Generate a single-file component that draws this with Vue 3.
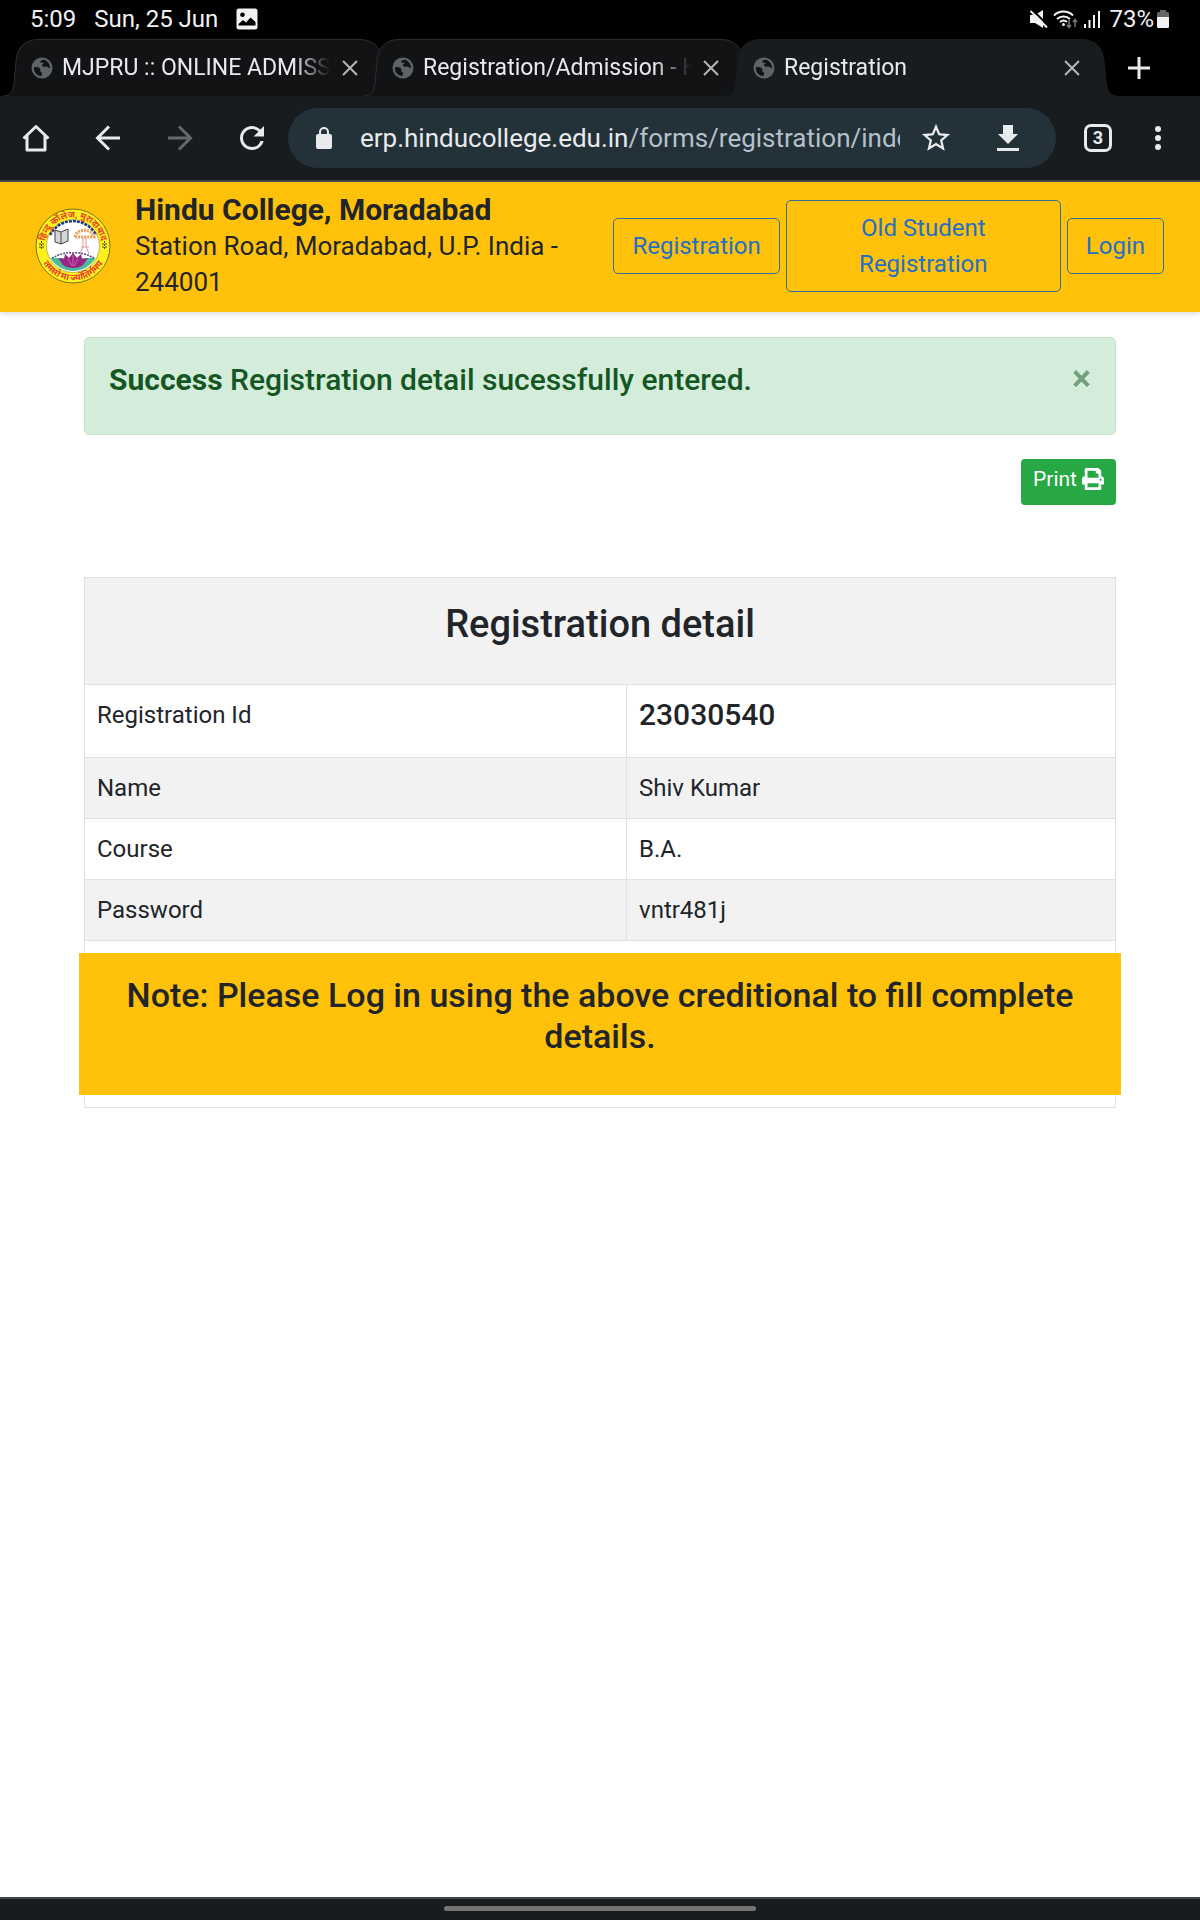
<script setup>
import { ref } from 'vue';

const tabs = [
  { id: 1, title: 'MJPRU :: ONLINE ADMISSION', active: false },
  { id: 2, title: 'Registration/Admission - Hindu', active: false },
  { id: 3, title: 'Registration', active: true },
];

const details = [
  { label: 'Name', value: 'Shiv Kumar' },
  { label: 'Course', value: 'B.A.' },
  { label: 'Password', value: 'vntr481j' },
];

const showAlert = ref(true);

function printPage() {
  window.print();
}
</script>

<template>
  <div class="screen">
    <div class="status-bar">
      <div class="status-left">
        <span>5:09</span>
        <span>Sun, 25 Jun</span>
        <svg width="22" height="22" viewBox="0 0 22 22">
          <path fill="#f2f2f2" fill-rule="evenodd" d="M3 0.500h16a2.500 2.500 0 0 1 2.500 2.500v16a2.500 2.500 0 0 1-2.500 2.500h-16a2.500 2.500 0 0 1-2.500-2.500v-16a2.500 2.500 0 0 1 2.500-2.500zM6.500 4.500a2.300 2.300 0 1 0 .01 0zM2.500 17.500h17v-3.500l-5-4.500-4.500 5-3-2.500-4.500 4z" />
        </svg>
      </div>
      <div class="status-right">
        <svg width="20" height="20" viewBox="0 0 20 20">
          <path fill="#f2f2f2" d="M1 6h5l8-5v18l-8-5H1z" />
          <path stroke="#000" stroke-width="2" d="M3.500 1l16 16" />
          <path stroke="#f2f2f2" stroke-width="2" d="M1.500 2l16.500 16.500" />
        </svg>
        <svg width="26" height="20" viewBox="0 0 26 20">
          <g fill="none" stroke="#f2f2f2" stroke-width="2">
            <path d="M1 6.500a13.500 13.500 0 0 1 19 0" />
            <path d="M4 10a9.500 9.500 0 0 1 13 0" />
            <path d="M7 13a5.500 5.500 0 0 1 7 0" />
          </g>
          <circle cx="10.500" cy="15.500" r="1.500" fill="#f2f2f2" />
          <path fill="none" stroke="#777" stroke-width="1.500" d="M16 11v7M14 16l2 2.500 2-2.500M22 18v-7M20 13l2-2.500 2 2.500" />
        </svg>
        <svg width="18" height="20" viewBox="0 0 18 20">
          <path fill="#f2f2f2" d="M1 15h2v4H1zM5.500 11h2v8h-2zM10 6h2v13h-2zM15 2h2v17h-2z" />
        </svg>
        <span class="battery">73%</span>
        <svg width="14" height="20" viewBox="0 0 14 20">
          <path fill="#666" d="M4 1h6v2h1.500a1.500 1.500 0 0 1 1.500 1.500V9H1V4.500A1.500 1.500 0 0 1 2.500 3H4z" />
          <path fill="#f2f2f2" d="M1 8h12v9.500a1.500 1.500 0 0 1-1.500 1.500h-9A1.500 1.500 0 0 1 1 17.500z" />
        </svg>
      </div>
    </div>

    <div class="tab-strip">
      <div v-for="tab in tabs" :key="tab.id" class="tab" :class="{ active: tab.active }">
        <svg class="tab-shape" viewBox="0 0 392 57" preserveAspectRatio="none">
          <path d="M0 57C8 57 10 52 11 44L13 22C14 8 22 .5 35 .5H357C370 .5 378 8 379 22L381 42C382 52 386 57 392 57" />
        </svg>
        <svg class="globe" width="22" height="22" viewBox="0 0 22 22">
          <circle cx="11" cy="11" r="10.500" fill="#5f6368" />
          <path class="land" d="M3 10c3 0 5 0 6 1.500 1 1.300-.5 3 1 3.500 1.500.3 1 2 .5 4C6 19 2.500 15.500 3 10zM9 5c1-2 3-2.500 5-2 3 1.500 5 4.500 5 8-2 .5-2-2-4-1.500-2.500.5-4 0-4-1.500 0-1.300 2-1 1.500-2C12 5 10 6.500 9 5z" />
        </svg>
        <span class="tab-title">{{ tab.title }}</span>
        <button class="icon-btn tab-close" aria-label="Close tab">
          <svg width="16" height="16" viewBox="0 0 16 16">
            <path stroke="#b4b6b8" stroke-width="2" d="M1 1l14 14M15 1L1 15" />
          </svg>
        </button>
      </div>
      <button class="icon-btn new-tab" aria-label="New tab">
        <svg width="22" height="22" viewBox="0 0 22 22">
          <path stroke="#e8eaed" stroke-width="3" d="M11 0v22M0 11h22" />
        </svg>
      </button>
    </div>

    <div class="toolbar">
      <button class="icon-btn tool" aria-label="Home">
        <svg width="28" height="28" viewBox="0 0 28 28">
          <path fill="none" stroke="#e8eaed" stroke-width="3" stroke-linejoin="round" d="M1.500 14.500L14 2.500l12.500 12M5 12v14h18V12" />
        </svg>
      </button>
      <button class="icon-btn tool" aria-label="Back">
        <svg width="26" height="26" viewBox="0 0 26 26">
          <path fill="none" stroke="#e8eaed" stroke-width="3" d="M25 13H3M14 1.500L2.500 13 14 24.500" />
        </svg>
      </button>
      <button class="icon-btn tool" aria-label="Forward">
        <svg width="26" height="26" viewBox="0 0 26 26">
          <path fill="none" stroke="#66696c" stroke-width="3" d="M1 13h22M12 1.500L23.500 13 12 24.500" />
        </svg>
      </button>
      <button class="icon-btn tool" aria-label="Reload">
        <svg width="36" height="36" viewBox="0 0 24 24">
          <path fill="#e8eaed" d="M17.650 6.350A7.958 7.958 0 0 0 12 4c-4.420 0-7.990 3.580-7.990 8s3.570 8 7.990 8c3.730 0 6.840-2.550 7.730-6h-2.080A5.990 5.990 0 0 1 12 18c-3.310 0-6-2.690-6-6s2.690-6 6-6c1.660 0 3.140.690 4.220 1.780L13 11h7V4l-2.350 2.350z" />
        </svg>
      </button>
      <div class="omnibox">
        <svg class="lock" width="16" height="22" viewBox="0 0 16 22">
          <path fill="none" stroke="#e8eaed" stroke-width="2" d="M4 9V5a4 4 0 0 1 8 0v4" />
          <rect y="7" width="16" height="15" rx="2" fill="#e8eaed" />
        </svg>
        <div class="url">erp.hinducollege.edu.in<span>/forms/registration/index</span></div>
        <button class="icon-btn tool" aria-label="Bookmark">
          <svg width="34" height="34" viewBox="0 0 24 24">
            <path fill="#e8eaed" d="M22 9.240l-7.190-.620L12 2 9.190 8.630 2 9.240l5.460 4.730L5.820 21 12 17.270 18.180 21l-1.630-7.030L22 9.240zM12 15.400l-3.760 2.270 1-4.280-3.320-2.880 4.380-.380L12 6.100l1.710 4.040 4.380.380-3.320 2.880 1 4.280L12 15.400z" />
          </svg>
        </button>
        <button class="icon-btn tool" aria-label="Download">
          <svg width="22" height="26" viewBox="0 0 22 26">
            <path fill="#e8eaed" d="M6 0h10v9h5L11 19 1 9h5zM0 23h22v3H0z" />
          </svg>
        </button>
      </div>
      <button class="icon-btn tab-count" aria-label="Open tabs">
        <span>3</span>
      </button>
      <button class="icon-btn menu" aria-label="Menu">
        <svg width="6" height="26" viewBox="0 0 6 26">
          <g fill="#e8eaed">
            <circle cx="3" cy="4" r="3" />
            <circle cx="3" cy="13" r="3" />
            <circle cx="3" cy="22" r="3" />
          </g>
        </svg>
      </button>
    </div>

    <header class="site-header">
      <svg class="logo" width="76" height="76" viewBox="0 0 76 76">
        <defs>
          <path id="arc-top" d="M9.500 38a28.500 28.500 0 0 1 57 0" />
          <path id="arc-bottom" d="M3.500 38a34.500 34.500 0 0 0 69 0" />
        </defs>
        <circle cx="38" cy="38" r="37" fill="#fdf01c" stroke="#77751c" />
        <circle cx="38" cy="38" r="26.500" fill="#fff" stroke="#b9bd4a" />
        <path fill="#4dbb98" d="M15.500 50h45a26 26 0 0 1-45 0z" />
        <path fill="none" stroke="#1f3b78" stroke-width="2.500" stroke-dasharray="3 1" d="M15 27a26 26 0 0 1 46 0" />
        <path fill="none" stroke="#4a4f86" stroke-width="1.500" stroke-dasharray="2 1" d="M17 50c6-3 13-6 21-5 8-1 15 2 21 5" />
        <path fill="#d6d6d6" stroke="#444" d="M20 22l6 2 7-3v12l-7 3-6-2zM26 24v12" />
        <path fill="none" stroke="#e8a05a" stroke-width="3" stroke-dasharray="2 1" d="M40 29c2-9 17-9 19 0z" />
        <path fill="none" stroke="#d99" d="M48 30v8l-3 8M51 30v8l3 8M46 39h8" />
        <path fill="#9b2383" d="M38 45l4 5 4-4 1 5 6-1-5 7c-5 4-15 4-20 0l-5-7 6 1 1-5 4 4z" />
        <path fill="none" stroke="#c968b4" d="M38 47v11M33 51l4 7M43 51l-4 7" />
        <path stroke="#4a4a20" stroke-dasharray="2 1" d="M4 36h5M4 39h5M67 36h5M67 39h5M6.500 33v9M69.500 33v9" />
        <text class="logo-text"><textPath href="#arc-top" startOffset="50%">हिन्दू कॉलेज, मुरादाबाद</textPath></text>
        <text class="logo-text"><textPath href="#arc-bottom" startOffset="50%">तमसो मा ज्योतिर्गमय</textPath></text>
      </svg>
      <div class="brand">
        <strong>Hindu College, Moradabad</strong>
        <div>Station Road, Moradabad, U.P. India - 244001</div>
      </div>
      <nav>
        <a href="#registration">Registration</a>
        <a href="#old-student">Old Student Registration</a>
        <a href="#login">Login</a>
      </nav>
    </header>

    <main>
      <div v-if="showAlert" class="alert" role="alert">
        <h4><strong>Success</strong> Registration detail sucessfully entered.</h4>
        <button class="icon-btn alert-close" aria-label="Close" @click="showAlert = false">×</button>
      </div>

      <button class="print" @click="printPage">
        Print
        <svg width="22" height="22" viewBox="0 0 512 512">
          <path fill="#fff" d="M448 192V77.250c0-8.490-3.370-16.620-9.370-22.630L393.370 9.370c-6-6-14.140-9.370-22.630-9.370H96C78.330 0 64 14.330 64 32v160c-35.350 0-64 28.650-64 64v112c0 8.840 7.160 16 16 16h48v96c0 17.670 14.330 32 32 32h320c17.670 0 32-14.330 32-32v-96h48c8.840 0 16-7.160 16-16V256c0-35.350-28.650-64-64-64zm-64 256H128v-96h256v96zm0-224H128V64h192v48c0 8.840 7.160 16 16 16h48v96zm48 72c-13.250 0-24-10.750-24-24 0-13.260 10.750-24 24-24s24 10.740 24 24c0 13.250-10.750 24-24 24z" />
        </svg>
      </button>

      <table>
        <tbody>
          <tr>
            <th colspan="2" class="table-title"><h2>Registration detail</h2></th>
          </tr>
          <tr>
            <td class="label">Registration Id</td>
            <td><h4 class="reg-id">23030540</h4></td>
          </tr>
          <tr v-for="row in details" :key="row.label">
            <td class="label">{{ row.label }}</td>
            <td>{{ row.value }}</td>
          </tr>
          <tr>
            <td colspan="2">
              <h3 class="note">Note: Please Log in using the above creditional to fill complete details.</h3>
            </td>
          </tr>
        </tbody>
      </table>
    </main>

    <div class="nav-bar">
      <div class="nav-handle"></div>
    </div>
  </div>
</template>

<style>
body {
  margin: 0;
  background: #fff;
}
</style>

<style scoped>
* {
  box-sizing: border-box;
}
.screen {
  display: flex;
  flex-direction: column;
  min-height: 100vh;
  font-family: Roboto, "Noto Sans", sans-serif;
  font-size: 24px;
  line-height: 36px;
  color: #212529;
}
.screen svg {
  display: block;
  flex: none;
}
.icon-btn {
  display: flex;
  align-items: center;
  justify-content: center;
  flex: none;
  padding: 0;
  border: 0;
  background: none;
  font-family: inherit;
}

/* system status bar */
.status-bar {
  display: flex;
  align-items: center;
  justify-content: space-between;
  height: 39px;
  padding: 0 30px 2px;
  background: #000;
  color: #f2f2f2;
}
.status-left,
.status-right {
  display: flex;
  align-items: center;
}
.status-left {
  gap: 18px;
}
.status-right {
  gap: 4px;
}
.status-right .battery {
  margin: 0 -2px 0 4px;
}

/* browser tabs */
.tab-strip {
  display: flex;
  height: 57px;
  padding-left: 3px;
  background: #000;
  color: #e8eaed;
}
.tab {
  position: relative;
  display: flex;
  align-items: center;
  flex: 0 1 392px;
  min-width: 0;
  padding: 0 37px 0 28px;
}
.tab + .tab {
  margin-left: -31px;
}
.tab > * {
  position: relative;
}
.tab .tab-shape {
  position: absolute;
  top: 0;
  left: 0;
  width: 100%;
  height: 100%;
  fill: #121315;
  stroke: #2a2c2f;
}
.tab.active .tab-shape {
  fill: #191c1f;
  stroke: #191c1f;
}
.land {
  fill: #121315;
}
.tab-title {
  flex: 1;
  min-width: 0;
  margin: 0 12px 0 9px;
  overflow: hidden;
  white-space: nowrap;
  font-size: 23px;
  mask-image: linear-gradient(to right, #000 calc(100% - 36px), transparent);
}
.new-tab {
  width: 44px;
}

/* address bar */
.toolbar {
  display: flex;
  align-items: center;
  height: 86px;
  padding-right: 24px;
  border-bottom: 2px solid #45484b;
  background: #191c1f;
}
.tool {
  width: 72px;
  height: 60px;
}
.omnibox {
  display: flex;
  align-items: center;
  flex: 1;
  min-width: 0;
  height: 60px;
  padding-right: 12px;
  border-radius: 30px;
  background: #233138;
}
.lock {
  margin: 0 28px;
}
.url {
  flex: 1;
  min-width: 0;
  overflow: hidden;
  white-space: nowrap;
  font-size: 26px;
  color: #e8eaed;
}
.url span {
  color: #b5c0cb;
}
.tab-count {
  width: 84px;
}
.tab-count span {
  width: 28px;
  height: 28px;
  border: 3px solid #e8eaed;
  border-radius: 7px;
  font-size: 18px;
  font-weight: 700;
  line-height: 22px;
  color: #e8eaed;
}
.menu {
  width: 36px;
  height: 60px;
}

/* college header */
.site-header {
  position: relative;
  display: flex;
  align-items: center;
  min-height: 130px;
  padding: 8px 36px 10px 35px;
  background: #ffc10a;
  box-shadow: 0 2px 6px rgba(0, 0, 0, 0.15);
}
.brand {
  flex: 1;
  min-width: 0;
  margin: 0 24px;
  font-size: 26px;
}
.brand strong {
  display: block;
  font-size: 30px;
}
nav {
  display: flex;
  align-items: center;
  gap: 6px;
}
nav a {
  max-width: 275px;
  padding: 9px 18px;
  border: 1px solid #306f98;
  border-radius: 5px;
  color: #2470c4;
  text-align: center;
  text-decoration: none;
}
.logo-text {
  font-size: 9px;
  font-weight: 700;
  fill: #e8452c;
  text-anchor: middle;
}

/* page content */
main {
  display: flex;
  flex-direction: column;
  flex: 1;
  padding: 25px 84px;
}
h2,
h3,
h4 {
  margin: 0;
  font-weight: 500;
}
h2 {
  font-size: 38px;
  line-height: 46px;
}
h3 {
  font-size: 34px;
  line-height: 41px;
}
h4 {
  font-size: 30px;
  line-height: 35px;
}
.alert {
  display: flex;
  align-items: flex-start;
  justify-content: space-between;
  padding: 24px 24px 37px;
  border: 1px solid #c3e6cb;
  border-radius: 5px;
  background: #d4edda;
  color: #155724;
}
.alert strong {
  font-weight: 700;
}
.alert-close {
  font-size: 36px;
  font-weight: 700;
  line-height: 35px;
  color: #155724;
  opacity: 0.5;
  text-shadow: 0 1px 0 #fff;
}
.print {
  display: flex;
  align-items: center;
  align-self: flex-end;
  gap: 5px;
  margin: 24px 0 72px;
  padding: 5px 12px 11px;
  border: 0;
  border-radius: 4px;
  background: #28a745;
  color: #fff;
  font-family: inherit;
  font-size: 21px;
  line-height: 30px;
}
table {
  width: 100%;
  border-collapse: collapse;
}
th,
td {
  padding: 12px;
  border: 1px solid #dee2e6;
  text-align: left;
  vertical-align: top;
}
tr:nth-child(odd):not(:last-child) {
  background: #f2f2f2;
}
.label {
  width: 542px;
}
.table-title {
  padding: 23px 12px 37px;
}
.table-title h2 {
  text-align: center;
}
.reg-id {
  padding-bottom: 13px;
}
.note {
  position: relative;
  margin: 0 -18px;
  padding: 22px 18px 38px;
  background: #ffc10a;
  text-align: center;
}

/* gesture bar */
.nav-bar {
  display: flex;
  align-items: center;
  justify-content: center;
  height: 23px;
  padding-bottom: 2px;
  border-top: 2px solid #3f454b;
  background: #191c1f;
}
.nav-handle {
  width: 26%;
  height: 5px;
  border-radius: 3px;
  background: #747474;
}
</style>
